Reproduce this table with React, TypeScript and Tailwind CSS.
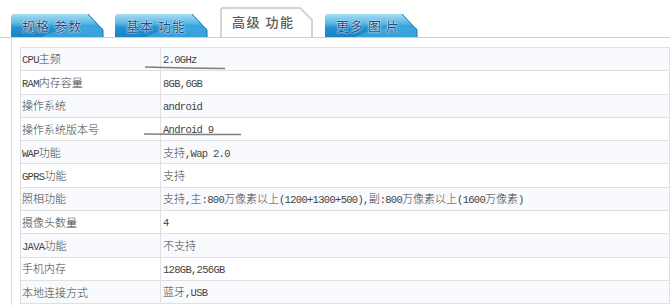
import React from "react";

const rows: [string, string][] = [
  ["CPU主频", "2.0GHz"],
  ["RAM内存容量", "8GB,6GB"],
  ["操作系统", "android"],
  ["操作系统版本号", "Android 9"],
  ["WAP功能", "支持,Wap 2.0"],
  ["GPRS功能", "支持"],
  ["照相功能", "支持,主:800万像素以上(1200+1300+500),副:800万像素以上(1600万像素)"],
  ["摄像头数量", "4"],
  ["JAVA功能", "不支持"],
  ["手机内存", "128GB,256GB"],
  ["本地连接方式", "蓝牙,USB"],
];

function Mixed({ text }: { text: string }) {
  const parts = text.match(/[\u3000-\u9fff\uff00-\uffef]+|[^\u3000-\u9fff\uff00-\uffef]+/g) || [];
  return (
    <>
      {parts.map((p, i) =>
        /[\u3000-\u9fff\uff00-\uffef]/.test(p) ? (
          <span key={i} className="font-['Noto_Sans_CJK_SC',sans-serif] text-[11px] font-light">
            {p}
          </span>
        ) : (
          <span key={i} className="font-['Liberation_Mono','DejaVu_Sans_Mono',monospace] text-[10.5px] tracking-[-0.7px] whitespace-pre">
            {p}
          </span>
        )
      )}
    </>
  );
}

function BlueTab({ label, id }: { label: string; id: string }) {
  return (
    <div className="relative w-[94px] h-[23px] shrink-0">
      <svg className="absolute inset-0" width="94" height="23" viewBox="0 0 94 23">
        <defs>
          <linearGradient id={`g${id}`} x1="0" y1="0" x2="0" y2="1">
            <stop offset="0" stopColor="#a8dcf3" />
            <stop offset="0.4" stopColor="#5cb8e5" />
            <stop offset="0.6" stopColor="#2290d2" />
            <stop offset="1" stopColor="#1784c6" />
          </linearGradient>
        </defs>
        <path d="M0,23 L0,3 Q0,0 3,0 L77,0 L92,16 L92,23 Z" fill={`url(#g${id})`} />
        <path d="M30,23 C50,14 65,10 92,14 L92,23 Z" fill="#4fb3e6" opacity="0.6" />
        <path d="M77,0 L92,16 L92,23" fill="none" stroke="#1a6fa6" strokeWidth="1" />
      </svg>
      <div className="relative h-full flex items-center pl-[11px] text-[13px] tracking-[1px] text-[#1b4f86] font-['Noto_Sans_CJK_SC',sans-serif] leading-none [text-shadow:0_0_2px_#ffffff,0_0_1px_#ffffff]">
        {label}
      </div>
    </div>
  );
}

function ActiveTab({ label }: { label: string }) {
  return (
    <div className="relative w-[94px] h-[30px] shrink-0">
      <svg className="absolute inset-0" width="94" height="30" viewBox="0 0 94 30">
        <path d="M1,31 L1,3 Q1,1 3,1 L80,1 L92,13 L92,31" fill="#ffffff" stroke="#d4d4d4" strokeWidth="2" />
      </svg>
      <div className="relative h-full flex items-center pl-[12px] pb-[2px] text-[13px] tracking-[1.5px] text-[#5a5a5a] font-medium font-['Noto_Sans_CJK_SC',sans-serif] leading-none">
        {label}
      </div>
    </div>
  );
}

export default function App() {
  return (
    <div className="relative w-[670px] h-[305px] overflow-hidden bg-white">
      <div className="flex items-end h-[38px] border-b border-[#cfcfcf] pl-[11px]">
        <BlueTab label="规格 参数" id="1" />
        <div className="w-[10px]" />
        <BlueTab label="基本 功能" id="2" />
        <div className="w-[11px]" />
        <ActiveTab label="高级 功能" />
        <div className="w-[11px]" />
        <BlueTab label="更多 图 片" id="4" />
      </div>
      <div className="ml-[11px] border-l border-[#dcdcdc] h-[267px] pl-[8px] pt-[9px]">
        <div className="w-[650px] border border-[#e0e0e0] border-b-0">
          {rows.map(([k, v], i) => (
            <div
              key={k}
              className={`grid grid-cols-[140px_1fr] h-[23.3px] border-b border-[#e0e0e0] text-[#444] ${
                i % 2 === 0 ? "bg-[#f8fafd]" : "bg-white"
              }`}
            >
              <div className="flex items-center pl-[1px] pb-[3px] border-r border-[#e0e0e0] leading-none">
                <span>
                  <Mixed text={k} />
                </span>
              </div>
              <div className="flex items-center pl-[2px] pb-[3px] leading-none whitespace-nowrap">
                <span>
                  <Mixed text={v} />
                </span>
              </div>
            </div>
          ))}
        </div>
      </div>
      <svg className="absolute left-0 top-0 pointer-events-none" width="670" height="305">
        <path d="M145,67 Q185,68 225,68.5" stroke="#6a6a6a" strokeWidth="1.4" fill="none" opacity="0.85" />
        <path d="M144,134 Q192,134.5 241,134.5" stroke="#6a6a6a" strokeWidth="1.4" fill="none" opacity="0.85" />
      </svg>
    </div>
  );
}
